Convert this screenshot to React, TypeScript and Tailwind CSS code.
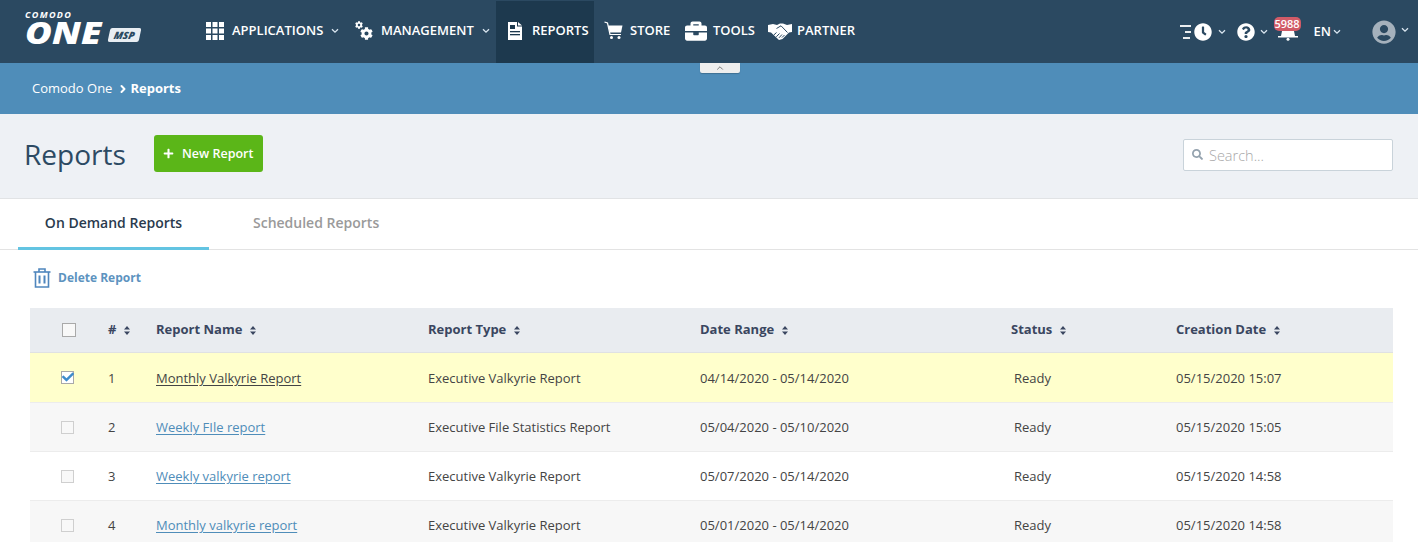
import React from "react";
import { ChevronUp, ChevronRight } from "lucide-react";
import { FaBriefcase, FaCog, FaClock, FaQuestionCircle, FaUserCircle, FaCheck, FaSearch, FaPlus } from "react-icons/fa";

const Sort = () => (
  <svg width="6" height="9" viewBox="0 0 6 9" className="ml-[8px] inline-block shrink-0">
    <path d="M3 0 L6 3.5 H0 Z M3 9 L6 5.5 H0 Z" fill="#3a4660" />
  </svg>
);

const Chev = ({ cls = "" }: { cls?: string }) => (
  <svg width="8" height="6" viewBox="0 0 8 6" className={cls}>
    <path d="M1 1.2 L4 4.2 L7 1.2" fill="none" stroke="#dbe7f1" strokeWidth="1.3" />
  </svg>
);

const GridIcon = () => (
  <svg width="18" height="18" viewBox="0 0 18 18" fill="#fff">
    {[0, 6.5, 13].map((y) =>
      [0, 6.5, 13].map((x) => <rect key={`${x}-${y}`} x={x} y={y} width="5" height="5" />)
    )}
  </svg>
);

const Gears = () => (
  <span className="relative block w-[18px] h-[19px]">
    <FaCog className="absolute right-0 bottom-0 text-white text-[13px]" />
    <FaCog className="absolute left-0 top-0 text-white text-[8px]" />
  </span>
);

const DocIcon = () => (
  <svg width="14" height="18" viewBox="0 0 14 18">
    <path d="M0 0 H9 V4.5 H14 V18 H0 Z" fill="#fff" />
    <path d="M10 0 L14 3.5 H10 Z" fill="#fff" />
    <rect x="2" y="3" width="5" height="4" fill="#1d394e" />
    <rect x="2" y="9" width="10" height="1.3" fill="#1d394e" />
    <rect x="2" y="12" width="10" height="1.3" fill="#1d394e" />
  </svg>
);

const CartIcon = () => (
  <svg width="19" height="19" viewBox="0 0 19 19">
    <path d="M0.5 1 L3.5 2 L6 13.5 H17" fill="none" stroke="#fff" strokeWidth="1.2" />
    <path d="M4.2 4.5 H18.5 L17 11.5 H5.7 Z" fill="#fff" />
    <circle cx="7.5" cy="16.5" r="1.5" fill="#fff" />
    <circle cx="15" cy="16.5" r="1.5" fill="#fff" />
  </svg>
);

const HandshakeIcon = () => (
  <svg width="24" height="18" viewBox="0 0 24 18">
    <path d="M0 3 L5 2 L9 3 L12 1.5 L15 1.5 L19 3 L24 2 V10 L21 10.5 L14.5 17 L11 18 L3 10.5 L0 10 Z" fill="#fff" />
    <path d="M8.5 6.5 L13 3.8 L19.5 10.5" fill="none" stroke="#2b4961" strokeWidth="1" />
    <path d="M8.5 10.5 L5.8 13 M11.5 11.5 L8.3 14.8 M14 12.5 L11 15.8 M16.5 13 L14 15.5" fill="none" stroke="#2b4961" strokeWidth="1" />
  </svg>
);

const TrashIcon = () => (
  <svg width="18" height="20" viewBox="0 0 18 20" fill="none" stroke="#4f86bd" strokeWidth="1.6">
    <path d="M0.5 4 H17.5" />
    <path d="M6 4 V1 H12 V4" />
    <path d="M2.5 4 V19 H15.5 V4" />
    <path d="M6.5 7.5 V15.5 M11.5 7.5 V15.5" strokeWidth="2" />
  </svg>
);

const NavItem = ({ icon, label, active, w, chev, gap = "ml-[8px]" }: { icon: React.ReactNode; label: string; active?: boolean; w: string; chev?: boolean; gap?: string }) => (
  <div className={`flex items-center h-[62px] pb-[2px] ${w} ${active ? "bg-[#1d394e] pl-[12px]" : ""}`}>
    {icon}
    <span className={`text-white text-[13px] font-semibold ${gap}`}>{label}</span>
    {chev && <Chev cls="ml-[8px]" />}
  </div>
);

const rows = [
  { n: 1, name: "Monthly Valkyrie Report", type: "Executive Valkyrie Report", range: "04/14/2020 - 05/14/2020", date: "05/15/2020 15:07", bg: "bg-[#ffffcc]", h: "h-[50px]", sel: true },
  { n: 2, name: "Weekly FIle report", type: "Executive File Statistics Report", range: "05/04/2020 - 05/10/2020", date: "05/15/2020 15:05", bg: "bg-[#f7f7f7]", h: "h-[49px] pt-[2px]" },
  { n: 3, name: "Weekly valkyrie report", type: "Executive Valkyrie Report", range: "05/07/2020 - 05/14/2020", date: "05/15/2020 14:58", bg: "bg-white", h: "h-[49px] pt-[2px]" },
  { n: 4, name: "Monthly valkyrie report", type: "Executive Valkyrie Report", range: "05/01/2020 - 05/14/2020", date: "05/15/2020 14:58", bg: "bg-[#f7f7f7]", h: "h-[49px] pt-[2px]" },
];

const cols = "grid grid-cols-[78px_48px_272px_272px_311px_165px_1fr] items-center";

export default function App() {
  return (
    <div className="w-[1418px] h-[542px] overflow-hidden bg-white font-['Open_Sans',sans-serif] text-[13px] text-[#444]">
      {/* Top nav */}
      <div className="h-[63px] bg-[#2b4961] flex items-center">
        <div className="w-[206px] pl-[25px] shrink-0 h-full flex flex-col justify-center">
          <div className="text-white text-[9px] font-bold italic tracking-[1.3px] leading-[8px] mt-[-7px] mb-[2px]">COMODO</div>
          <div className="flex items-center h-[24px]">
            <span className="text-white text-[30px] leading-[24px] font-extrabold italic scale-x-[1.22] origin-left">ONE</span>
            <span className="ml-[21px] bg-[#e8edf2] text-[#2b4961] text-[10px] font-extrabold italic leading-[14px] h-[14px] w-[31px] text-center -skew-x-12 rounded-[2px] mt-[3px]">MSP</span>
          </div>
        </div>
        <div className="flex items-center">
          <NavItem w="w-[149px]" icon={<GridIcon />} label="APPLICATIONS" chev />
          <NavItem w="w-[141px]" icon={<Gears />} label="MANAGEMENT" chev />
          <NavItem w="w-[98px]" active gap="ml-[10px]" icon={<DocIcon />} label="REPORTS" />
          <div className="w-[10px]" />
          <NavItem w="w-[81px]" gap="ml-[7px]" icon={<CartIcon />} label="STORE" />
          <NavItem w="w-[83px]" icon={<FaBriefcase className="text-white text-[22px]" />} label="TOOLS" gap="ml-[6px]" />
          <div className="flex items-center h-[62px] pb-[2px]">
            <HandshakeIcon />
            <span className="text-white text-[13px] font-semibold ml-[5px]">PARTNER</span>
          </div>
        </div>
        <div className="ml-auto flex items-center h-full">
          <div className="flex flex-col gap-[4px] mr-[3px] mt-[1px]">
            <span className="block w-[11px] h-[2px] bg-white/90" />
            <span className="block w-[6px] h-[2px] bg-white/90 ml-[5px]" />
            <span className="block w-[7px] h-[2px] bg-white/90 ml-[3px]" />
          </div>
          <FaClock className="text-white text-[18px]" />
          <Chev cls="ml-[6px]" />
          <FaQuestionCircle className="text-white text-[18px] ml-[11px]" />
          <Chev cls="ml-[5px]" />
          <div className="relative w-[28px] h-[24px] ml-[6px] mt-[-5px]">
            <div className="absolute left-0 top-0 w-[27px] h-[14px] rounded-[5px] bg-[#d15b67] text-white text-[11px] font-semibold leading-[14px] text-center">5988</div>
            <svg width="22" height="10" viewBox="0 0 22 10" className="absolute left-[3px] top-[14px]">
              <path d="M5 0 H17 L18 5 H21 V6.5 H1 V5 H4 Z" fill="#fff" />
              <circle cx="11" cy="8.3" r="1.5" fill="#fff" />
            </svg>
          </div>
          <span className="text-white text-[13px] font-semibold ml-[12px]">EN</span>
          <Chev cls="ml-[2px]" />
          <FaUserCircle className="text-[#a5b1bc] text-[24px] ml-[31px]" />
          <Chev cls="ml-[5px] mr-[9px] mt-[-3px]" />
        </div>
      </div>

      {/* Breadcrumb */}
      <div className="relative h-[51px] bg-[#4f8db9] flex items-center pl-[32px] text-white">
        <span className="text-[13px]">Comodo One</span>
        <ChevronRight size={12} strokeWidth={4} className="ml-[5px] mr-[1px] text-white" />
        <span className="text-[13px] font-bold">Reports</span>
        <div className="absolute left-[700px] top-0 w-[40px] h-[10px] bg-[#eeeeee] rounded-b-[2px] flex items-center justify-center shadow-[0_1px_1px_rgba(0,0,0,0.2)]">
          <ChevronUp size={10} className="text-[#666]" />
        </div>
      </div>

      {/* Page header */}
      <div className="h-[85px] bg-[#eef1f5] border-b border-[#e1e3e5] flex items-center pl-[24px] pr-[25px]">
        <h1 className="text-[28px] text-[#2c4a63] leading-[38px] mt-[-5px]">Reports</h1>
        <button className="ml-[28px] mt-[-6px] w-[109px] h-[37px] rounded-[3px] bg-[#5bb618] text-white text-[12.5px] font-semibold flex items-center justify-center gap-[8px] pt-[2px]">
          <FaPlus className="text-[11px] mt-[-2px]" />
          New Report
        </button>
        <div className="ml-auto mt-[-3px] w-[210px] h-[32px] bg-white border border-[#c9d3da] rounded-[2px] flex items-center pl-[8px]">
          <FaSearch className="text-[#94a2ae] text-[11px]" />
          <span className="ml-[6px] text-[14.5px] font-light text-[#a8a8a8] pt-[2px]">Search...</span>
        </div>
      </div>

      {/* Tabs */}
      <div className="h-[51px] border-b border-[#e3e3e3] flex pl-[18px] items-stretch">
        <div className="relative w-[191px] flex items-center justify-center font-semibold text-[14px] text-[#2a3a4d] pb-[4px]">
          On Demand Reports
          <div className="absolute left-0 right-0 bottom-[-1px] h-[3px] bg-[#63c4e2]" />
        </div>
        <div className="ml-[44px] flex items-center font-semibold text-[14px] text-[#9a9a9a] pb-[4px]">Scheduled Reports</div>
      </div>

      {/* Action */}
      <div className="h-[58px] flex items-center pl-[33px] pb-[2px]">
        <TrashIcon />
        <span className="ml-[7px] text-[12px] font-bold text-[#5d93bf]">Delete Report</span>
      </div>

      {/* Table */}
      <div className="mx-[30px] w-[1363px]">
        <div className={`${cols} h-[45px] bg-[#e9ecf0] border-b border-[#dfe1e3] font-bold text-[13px] text-[#3a4660]`}>
          <div className="pl-[32px]">
            <div className="w-[14px] h-[14px] border border-[#a9a9a9] bg-[#f8f8f8]" />
          </div>
          <div className="flex items-center">#<Sort /></div>
          <div className="flex items-center">Report Name<Sort /></div>
          <div className="flex items-center">Report Type<Sort /></div>
          <div className="flex items-center">Date Range<Sort /></div>
          <div className="flex items-center">Status<Sort /></div>
          <div className="flex items-center">Creation Date<Sort /></div>
        </div>
        {rows.map((r) => {
          const txt = r.sel ? "mt-[3px]" : "";
          return (
            <div key={r.n} className={`${cols} ${r.h} ${r.bg} border-b border-[#ececec] text-[13px] text-[#444]`}>
              <div className={`pl-[31px] ${r.sel ? "" : "mb-[2px]"}`}>
                <div className={`relative w-[13px] h-[13px] border ${r.sel ? "border-[#a9a9a9] bg-white" : "border-[#cfcfcf] bg-[#f8f8f8]"}`}>
                  {r.sel && <FaCheck className="absolute left-[0px] top-[-1px] text-[#3e8ccb] text-[12px]" />}
                </div>
              </div>
              <div className={txt}>{r.n}</div>
              <div className={txt}>
                <span className={`underline underline-offset-2 ${r.sel ? "text-[#444]" : "text-[#4f8db9]"}`}>{r.name}</span>
              </div>
              <div className={txt}>{r.type}</div>
              <div className={txt}>{r.range}</div>
              <div className={`pl-[3px] ${txt}`}>Ready</div>
              <div className={txt}>{r.date}</div>
            </div>
          );
        })}
      </div>
    </div>
  );
}
